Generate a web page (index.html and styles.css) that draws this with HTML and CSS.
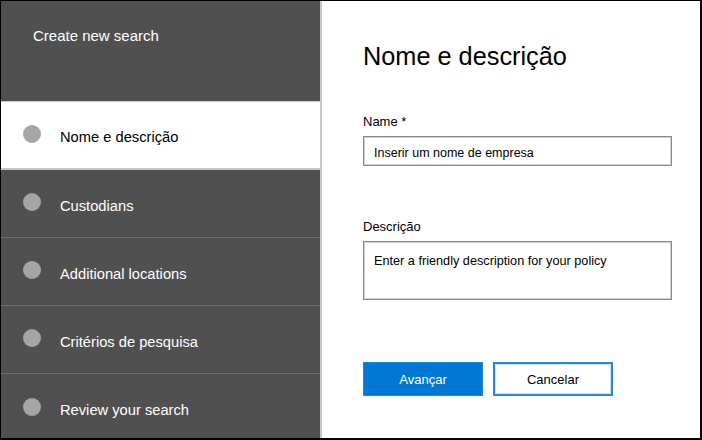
FILE: index.html
```html
<!DOCTYPE html>
<html>
<head>
<meta charset="utf-8">
<link rel="stylesheet" href="styles.css">
</head>
<body>
<div class="frame">
  <nav class="sidebar">
    <div class="sidebar-title">Create new search</div>
    <div class="step active"><span class="dot"></span><span class="step-label">Nome e descrição</span></div>
    <div class="step"><span class="dot"></span><span class="step-label">Custodians</span></div>
    <div class="step"><span class="dot"></span><span class="step-label">Additional locations</span></div>
    <div class="step"><span class="dot"></span><span class="step-label">Critérios de pesquisa</span></div>
    <div class="step last"><span class="dot"></span><span class="step-label">Review your search</span></div>
  </nav>
  <main class="content">
    <h1 class="title">Nome e descrição</h1>
    <label class="field-label">Name *</label>
    <div class="input">Inserir um nome de empresa</div>
    <label class="field-label desc-label">Descrição</label>
    <div class="textarea">Enter a friendly description for your policy</div>
    <div class="actions">
      <button class="btn primary">Avançar</button>
      <button class="btn secondary">Cancelar</button>
    </div>
  </main>
</div>
</body>
</html>
```
FILE: styles.css
```css
* { box-sizing: border-box; }
html, body { margin: 0; padding: 0; background: #fff; }
body { font-family: "Liberation Sans", Arial, sans-serif; }
.frame {
  width: 702px;
  height: 440px;
  display: flex;
  border-top: 1px solid #000;
  border-left: 1px solid #000;
  border-right: 2px solid #000;
  border-bottom: 2px solid #000;
  overflow: hidden;
}
.sidebar {
  width: 322px;
  flex: none;
  background: #505050;
  border-right: 2px solid #c8c8c8;
  display: flex;
  flex-direction: column;
  margin-top: -1px;
  margin-left: -1px;
}
.sidebar-title {
  height: 102px;
  flex: none;
  padding: 27px 0 0 33px;
  color: #fff;
  font-size: 15px;
  border-bottom: 1px solid #c8c8c8;
}
.step {
  height: 68px;
  flex: none;
  display: flex;
  align-items: center;
  padding-left: 23px;
  color: #fff;
  font-size: 14.7px;
  border-bottom: 1px solid #6e6e6e;
}
.step.active {
  background: #fff;
  color: #000;
  border-bottom: 2px solid #c8c8c8;
}
.step.last { border-bottom: none; }
.dot {
  width: 18px;
  height: 18px;
  border-radius: 50%;
  background: #a6a6a6;
  margin-right: 19px;
  margin-top: -3px;
  flex: none;
}
.step-label { line-height: 1; padding-top: 5px; }
.content {
  flex: 1;
  padding: 40px 0 0 41px;
  display: flex;
  flex-direction: column;
}
.title {
  margin: 0;
  font-weight: normal;
  font-size: 25.3px;
  line-height: 30px;
  color: #000;
}
.field-label {
  display: block;
  font-size: 13px;
  color: #000;
  margin-top: 43px;
  line-height: 16px;
}
.input {
  margin-top: 6px;
  width: 309px;
  height: 30px;
  border: 1px solid #8a8a8a;
  box-shadow: inset 0 0 0 1px #d0d0d0;
  padding: 2px 0 0 10px;
  font-size: 12.5px;
  line-height: 28px;
  color: #000;
}
.desc-label { margin-top: 53px; }
.textarea {
  margin-top: 6px;
  width: 309px;
  height: 59px;
  border: 1px solid #8a8a8a;
  box-shadow: inset 0 0 0 1px #d0d0d0;
  padding: 11px 0 0 10px;
  font-size: 12.7px;
  line-height: 16px;
  color: #000;
}
.actions {
  margin-top: 62px;
  display: flex;
  gap: 10px;
}
.btn {
  width: 120px;
  height: 34px;
  font-family: "Liberation Sans", Arial, sans-serif;
  font-size: 13px;
  padding: 0;
  cursor: pointer;
}
.btn.primary {
  background: #0078d4;
  color: #fff;
  border: 1px solid #1d88d8;
}
.btn.secondary {
  background: #fff;
  color: #000;
  border: 2px solid #2a86d8;
  box-shadow: inset 0 0 0 1px #cfe4f6;
}
```
